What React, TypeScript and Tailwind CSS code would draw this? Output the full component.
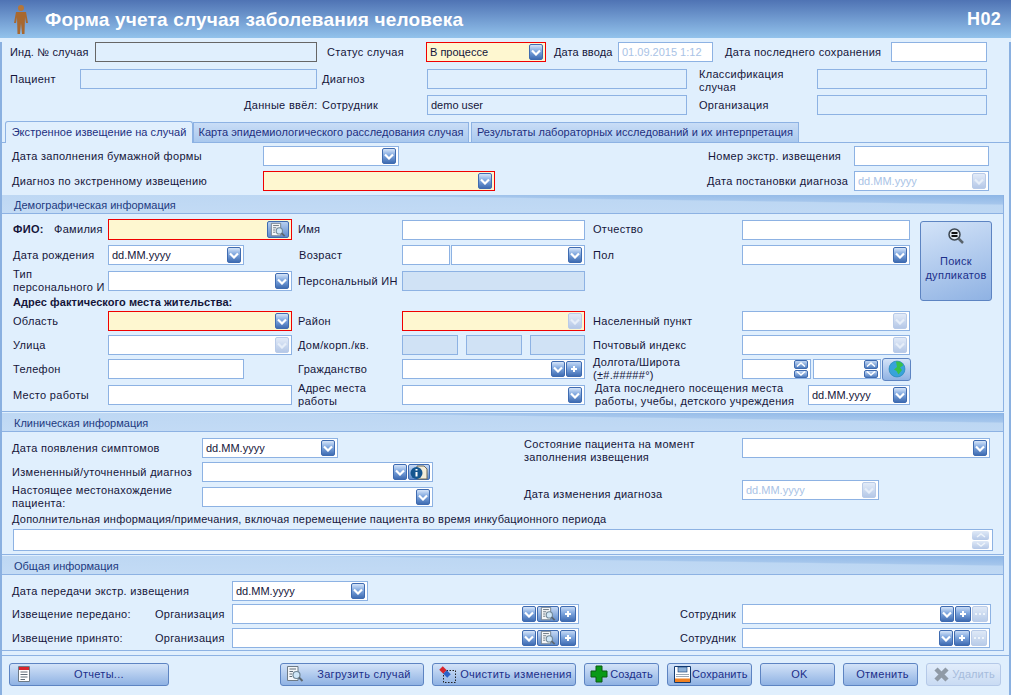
import type { ReactNode } from "react";

const TONES = {
  white: "border-[#8db2e3] bg-white",
  red: "border-[#f00000] bg-[#fef7d0]",
  blank: "border-[#8db2e3] bg-[#e0effd]",
  shade: "border-[#8db2e3] bg-[#d0e2f5]",
  dark: "border-[#666666] bg-[#e0effd]",
};

function Row({ className = "", h = "h-5", children }: { className?: string; h?: string; children: ReactNode }) {
  return <div className={"flex items-center " + h + " " + className}>{children}</div>;
}

function Lb({ className = "", children }: { className?: string; children: ReactNode }) {
  return <div className={"shrink-0 leading-[13px] " + className}>{children}</div>;
}

function Chevron({ off }: { off?: boolean }) {
  return (
    <svg width="10" height="7" viewBox="0 0 10 7">
      <path d="M1 1.5 L5 5.5 L9 1.5" fill="none" stroke={off ? "#e6eef9" : "#ffffff"} strokeWidth="2.2" />
    </svg>
  );
}

function Arrow({ off }: { off?: boolean }) {
  return (
    <div
      className={
        "flex h-4 w-[14px] shrink-0 items-center justify-center rounded-[2px] border " +
        (off
          ? "border-[#b9cbe8] bg-[linear-gradient(180deg,#e2ebf8,#b5c8e7)]"
          : "border-[#3f6bb0] bg-[linear-gradient(180deg,#d6e5f9,#7ea6de_45%,#3f6cb2)]")
      }
    >
      <Chevron off={off} />
    </div>
  );
}

function Plus() {
  return (
    <div className="flex h-4 w-4 shrink-0 items-center justify-center rounded-[2px] border border-[#3f6bb0] bg-[linear-gradient(180deg,#c5d9f5,#7ea6de_45%,#3f6cb2)]">
      <svg width="8" height="8" viewBox="0 0 8 8">
        <path d="M4 1 V7 M1 4 H7" stroke="#ffffff" strokeWidth="2" />
      </svg>
    </div>
  );
}

function Dots() {
  return (
    <div className="flex h-4 w-4 shrink-0 items-center justify-center rounded-[2px] border border-[#b9cbe8] bg-[linear-gradient(180deg,#dfe9f7,#b9cce9)]">
      <svg width="10" height="2" viewBox="0 0 10 2">
        <path d="M0 1 H2 M4 1 H6 M8 1 H10" stroke="#eef4fb" strokeWidth="2" />
      </svg>
    </div>
  );
}

function DocLens({ size = 18 }: { size?: number }) {
  return (
    <svg width={size} height={size} viewBox="0 0 18 18">
      <path d="M1.5 1.5 H12 V15.5 H1.5 Z" fill="#f4f6f8" stroke="#6d7a86" />
      <path d="M3.5 4 H10 M3.5 6.5 H7 M3.5 9 H6 M3.5 11.5 H6" stroke="#5f6c78" strokeWidth="1" />
      <circle cx="10.5" cy="10" r="3.5" fill="#cfe6f7" stroke="#6f8696" strokeWidth="1.2" />
      <path d="M13 12.5 L16.5 16" stroke="#5d6870" strokeWidth="2" />
    </svg>
  );
}

function Lens() {
  return (
    <div className="flex h-4 w-[22px] shrink-0 items-center justify-center rounded-[2px] border border-[#3f6bb0] bg-[linear-gradient(180deg,#c5d9f5,#5f8bcb)]">
      <DocLens size={16} />
    </div>
  );
}

function Info() {
  return (
    <div className="flex h-4 w-[22px] shrink-0 items-center justify-center rounded-[2px] border border-[#3f6bb0] bg-[linear-gradient(180deg,#c5d9f5,#5f8bcb)]">
      <svg width="20" height="15" viewBox="0 0 20 15">
        <path d="M8 1 H15 L18 4 V14 H8 Z" fill="#f3ecd8" stroke="#6f6a58" />
        <circle cx="7.5" cy="8" r="6" fill="#14558f" />
        <path d="M7.5 4 V5.5 M7.5 7 V11.5" stroke="#ffffff" strokeWidth="2" />
      </svg>
    </div>
  );
}

function Spin() {
  return (
    <div className="flex h-[18px] w-[14px] shrink-0 flex-col gap-px">
      {[0, 1].map((i) => (
        <div key={i} className="flex flex-1 items-center justify-center rounded-[2px] border border-[#3f6bb0] bg-[linear-gradient(180deg,#c5d9f5,#4f7dc0)]">
          <svg width="10" height="5" viewBox="0 0 10 5">
            <path d={i === 0 ? "M1 4.500 L5 1 L9 4.500" : "M1 .5 L5 4 L9 .5"} fill="none" stroke="#ffffff" strokeWidth="1.500" />
          </svg>
        </div>
      ))}
    </div>
  );
}

function Field({
  className = "",
  h = "h-5",
  tone = "white",
  text,
  muted,
  children,
}: {
  className?: string;
  h?: string;
  tone?: keyof typeof TONES;
  text?: string;
  muted?: boolean;
  children?: ReactNode;
}) {
  return (
    <div className={"flex shrink-0 items-center gap-px border pr-[2px] " + h + " " + TONES[tone] + " " + className}>
      <span className={"flex-1 truncate pl-[3px] tracking-normal " + (muted ? "text-[#a9c3e6]" : "text-[#15153a]")}>{text}</span>
      {children}
    </div>
  );
}

function Section({ title, className = "", children }: { title: string; className?: string; children: ReactNode }) {
  return (
    <div className={"mr-[5px] border-r border-b border-[#8db2e3] " + className}>
      <div className="flex h-[19px] items-center border-b border-[#8db2e3] bg-[linear-gradient(180.8deg,#8db6e6_0%,#a5c6ec_28%,#bdd7f3_32%,#c3dbf5_100%)] pt-[2px] pl-3 tracking-normal text-[#1d3a80]">
        {title}
      </div>
      {children}
    </div>
  );
}

function Btn({ className = "", off, icon, label }: { className?: string; off?: boolean; icon?: ReactNode; label: string }) {
  return (
    <button
      className={
        "flex h-[23px] shrink-0 items-center rounded-[3px] border pl-1 whitespace-nowrap " +
        (off
          ? "border-[#b5c9e8] bg-[linear-gradient(180deg,#e2edfb,#c9dbf3)] text-[#a6bcdc]"
          : "border-[#5d84c2] bg-[linear-gradient(180deg,#d3e3f8,#8fb2e3)] text-[#1c2f8a]") +
        " " +
        className
      }
    >
      {icon && <span className="flex w-5 shrink-0 justify-center">{icon}</span>}
      <span className="flex-1 text-center">{label}</span>
    </button>
  );
}

export default function App() {
  return (
    <div className="h-[695px] w-[1011px] overflow-hidden bg-[#e0effd] font-['Liberation_Sans',sans-serif] text-[11px] tracking-[0.3px] text-[#15153a]">
      {/* title */}
      <div className="flex h-[38px] items-center bg-[linear-gradient(180deg,#4f73b4,#93c3ec)] pr-[10px] pl-[13px] font-bold text-white">
        <svg width="16" height="30" viewBox="0 0 16 30" className="shrink-0">
          <circle cx="8" cy="4" r="3" fill="#b5763a" />
          <path d="M3 8 H13 L15 19 H13 L12 13 L11.5 30 H9 L8 19 L7 30 H4.500 L4 13 L3 19 H1 Z" fill="#a8682f" />
        </svg>
        <div className="ml-4 flex-1 text-[19px] leading-none tracking-[0.2px]">Форма учета случая заболевания человека</div>
        <div className="text-[18px] leading-none">H02</div>
      </div>

      <div className="h-[657px] border-x-2 border-b-2 border-[#8ab0e0]">
        {/* case head */}
        <div className="pl-2">
          <Row className="mt-1">
            <Lb className="w-[85px] tracking-[0.15px]">Инд. № случая</Lb>
            <Field className="w-[222px]" tone="dark" />
            <Lb className="ml-[10px] w-[99px]">Статус случая</Lb>
            <Field className="w-[120px]" tone="red" text="В процессе">
              <Arrow />
            </Field>
            <Lb className="ml-2 w-[64px] tracking-[0.1px]">Дата ввода</Lb>
            <Field className="w-[95px]" text="01.09.2015 1:12" muted />
            <Lb className="ml-3 w-[166px]">Дата последнего сохранения</Lb>
            <Field className="w-[96px]" />
          </Row>
          <Row className="mt-[7px]">
            <Lb className="w-[70px]">Пациент</Lb>
            <Field className="w-[237px]" tone="blank" />
            <Lb className="ml-[5px] w-[105px]">Диагноз</Lb>
            <Field className="w-[260px]" tone="blank" />
            <Lb className="mt-1 ml-3 w-[118px]">Классификация случая</Lb>
            <Field className="w-[170px]" tone="blank" />
          </Row>
          <Row className="mt-[6px]">
            <Lb className="ml-[234px] w-[78px]">Данные ввёл:</Lb>
            <Lb className="w-[105px]">Сотрудник</Lb>
            <Field className="w-[260px]" tone="blank" text="demo user" />
            <Lb className="ml-3 w-[118px]">Организация</Lb>
            <Field className="w-[170px]" tone="blank" />
          </Row>
        </div>

        {/* tabs */}
        <div className="mt-[7px] flex h-[21px] items-end border-b border-[#8db2e3] pl-[3px] tracking-[0.05px] whitespace-nowrap">
          <div className="relative z-10 -mb-px flex h-[22px] w-[188px] items-center justify-center rounded-t-[3px] border-x border-t border-[#8db2e3] bg-[#e0effd] text-[#1d2f80]">
            Экстренное извещение на случай
          </div>
          <div className="flex h-5 w-[276px] items-center justify-center border border-b-0 border-[#8db2e3] bg-[linear-gradient(180deg,#c9ddf6,#a9c8ee)] text-[#1d2f80]">
            Карта эпидемиологического расследования случая
          </div>
          <div className="ml-[2px] flex h-5 w-[328px] items-center justify-center border border-b-0 border-[#8db2e3] bg-[linear-gradient(180deg,#c9ddf6,#a9c8ee)] text-[#1d2f80]">
            Результаты лабораторных исследований и их интерпретация
          </div>
        </div>

        {/* notice */}
        <div className="mt-[3px] pl-[10px]">
          <Row>
            <Lb className="w-[251px]">Дата заполнения бумажной формы</Lb>
            <Field className="w-[136px]">
              <Arrow />
            </Field>
            <Lb className="ml-[309px] w-[146px]">Номер экстр. извещения</Lb>
            <Field className="w-[135px]" />
          </Row>
          <Row className="mt-[5px]">
            <Lb className="w-[251px]">Диагноз по экстренному извещению</Lb>
            <Field className="w-[232px]" tone="red">
              <Arrow />
            </Field>
            <Lb className="ml-[212px] w-[147px]">Дата постановки диагноза</Lb>
            <Field className="w-[135px]" text="dd.MM.yyyy" muted>
              <Arrow off />
            </Field>
          </Row>
        </div>

        {/* demographics */}
        <Section title="Демографическая информация" className="mt-1">
          <div className="flex">
            <div className="w-[908px] pl-[11px]">
              <Row className="mt-[5px]" h="h-[21px]">
                <Lb className="flex w-[95px]">
                  <b className="w-[41px]">ФИО:</b>Фамилия
                </Lb>
                <Field className="w-[184px]" h="h-[21px]" tone="red">
                  <div className="flex h-[17px] w-[22px] items-center justify-center rounded-[2px] border border-[#3f6bb0] bg-[linear-gradient(180deg,#b6cff0,#5f8bcb)]">
                    <DocLens size={16} />
                  </div>
                </Field>
                <Lb className="ml-[6px] w-[104px]">Имя</Lb>
                <Field className="w-[183px]" />
                <Lb className="ml-2 w-[149px]">Отчество</Lb>
                <Field className="w-[168px]" />
              </Row>
              <Row className="mt-[5px]">
                <Lb className="w-[95px]">Дата рождения</Lb>
                <Field className="w-[136px]" text="dd.MM.yyyy">
                  <Arrow />
                </Field>
                <Lb className="ml-[55px] w-[103px]">Возраст</Lb>
                <Field className="w-[48px]" />
                <Field className="ml-px w-[134px]">
                  <Arrow />
                </Field>
                <Lb className="ml-2 w-[149px]">Пол</Lb>
                <Field className="w-[168px]">
                  <Arrow />
                </Field>
              </Row>
              <Row className="mt-[6px]">
                <Lb className="w-[95px]">Тип персонального И</Lb>
                <Field className="w-[184px]">
                  <Arrow />
                </Field>
                <Lb className="ml-[6px] w-[104px]">Персональный ИН</Lb>
                <Field className="w-[183px]" tone="shade" />
              </Row>
              <div className="mt-[5px] h-3 leading-3 font-bold tracking-[0.05px]">Адрес фактического места жительства:</div>
              <Row className="mt-[3px]">
                <Lb className="w-[95px]">Область</Lb>
                <Field className="w-[184px]" tone="red">
                  <Arrow />
                </Field>
                <Lb className="ml-[6px] w-[104px]">Район</Lb>
                <Field className="w-[183px]" tone="red">
                  <Arrow off />
                </Field>
                <Lb className="ml-2 w-[149px]">Населенный пункт</Lb>
                <Field className="w-[168px]">
                  <Arrow off />
                </Field>
              </Row>
              <Row className="mt-1">
                <Lb className="w-[95px]">Улица</Lb>
                <Field className="w-[184px]">
                  <Arrow off />
                </Field>
                <Lb className="ml-[6px] w-[104px]">Дом/корп./кв.</Lb>
                <Field className="w-[56px]" tone="shade" />
                <Field className="ml-2 w-[56px]" tone="shade" />
                <Field className="ml-2 w-[55px]" tone="shade" />
                <Lb className="ml-2 w-[149px]">Почтовый индекс</Lb>
                <Field className="w-[168px]">
                  <Arrow off />
                </Field>
              </Row>
              <Row className="mt-1">
                <Lb className="w-[95px]">Телефон</Lb>
                <Field className="w-[136px]" />
                <Lb className="ml-[54px] w-[104px]">Гражданство</Lb>
                <Field className="w-[183px]">
                  <Arrow />
                  <Plus />
                </Field>
                <Lb className="ml-2 w-[149px]">
                  Долгота/Широта
                  <br />
                  (±#.#####°)
                </Lb>
                <Field className="w-[69px]">
                  <Spin />
                </Field>
                <Field className="ml-[2px] w-[68px]">
                  <Spin />
                </Field>
                <div className="ml-px flex h-[23px] w-[29px] shrink-0 items-center justify-center rounded-[3px] border border-[#5d84c2] bg-[linear-gradient(180deg,#d3e3f8,#8fb2e3)]">
                  <svg width="18" height="18" viewBox="0 0 18 18">
                    <circle cx="9" cy="9" r="8" fill="#38a3da" stroke="#1f7fb3" strokeWidth=".6" />
                    <path d="M8 1.500 C12 1 15 3 15 5.500 L12 7.500 L14 10 L10.500 14.500 L8.500 11 L6 9.500 L9 7 Z" fill="#38c14a" />
                  </svg>
                </div>
              </Row>
              <Row className="mt-[6px] mb-[6px]">
                <Lb className="w-[95px]">Место работы</Lb>
                <Field className="w-[184px]" />
                <Lb className="ml-[6px] w-[104px]">Адрес места работы</Lb>
                <Field className="w-[183px]">
                  <Arrow />
                </Field>
                <Lb className="ml-[10px] w-[213px]">
                  Дата последнего посещения места
                  <br />
                  работы, учебы, детского учреждения
                </Lb>
                <Field className="w-[102px]" text="dd.MM.yyyy">
                  <Arrow />
                </Field>
              </Row>
            </div>
            <button className="mt-[7px] ml-[10px] flex h-20 w-[72px] shrink-0 flex-col items-center rounded-[3px] border border-[#5d84c2] bg-[linear-gradient(160deg,#d3e3f8,#8fb2e3)] pt-[5px] leading-[14px] text-[#1c2f8a]">
              <svg width="18" height="18" viewBox="0 0 18 18">
                <circle cx="7.500" cy="7.500" r="5.500" fill="#dfe7ee" stroke="#3c4650" strokeWidth="1.500" />
                <path d="M4.500 6 H10.500 M4.500 9 H10.500" stroke="#111111" strokeWidth="2" />
                <path d="M11.500 11.500 L16 16" stroke="#59636b" strokeWidth="2.500" />
              </svg>
              <span className="mt-[9px]">Поиск</span>
              <span>дупликатов</span>
            </button>
          </div>
        </Section>

        {/* clinical */}
        <Section title="Клиническая информация" className="mt-px">
          <div className="pl-[10px]">
            <div className="flex h-[75px]">
              <div className="w-[512px] shrink-0">
                <Row className="mt-[6px]">
                  <Lb className="w-[190px]">Дата появления симптомов</Lb>
                  <Field className="w-[136px]" text="dd.MM.yyyy">
                    <Arrow />
                  </Field>
                </Row>
                <Row className="mt-1">
                  <Lb className="w-[190px]">Измененный/уточненный диагноз</Lb>
                  <Field className="w-[231px]">
                    <Arrow />
                    <Info />
                  </Field>
                </Row>
                <Row className="mt-[5px]">
                  <Lb className="w-[190px]">Настоящее местонахождение пациента:</Lb>
                  <Field className="w-[231px]">
                    <Arrow />
                  </Field>
                </Row>
              </div>
              <div>
                <div className="mt-[6px] flex items-start">
                  <Lb className="w-[218px]">
                    Состояние пациента на момент
                    <br />
                    заполнения извещения
                  </Lb>
                  <Field className="w-[248px]">
                    <Arrow />
                  </Field>
                </div>
                <div className="mt-4 flex items-start">
                  <Lb className="mt-2 w-[218px]">Дата изменения диагноза</Lb>
                  <Field className="w-[137px]" text="dd.MM.yyyy" muted>
                    <Arrow off />
                  </Field>
                </div>
              </div>
            </div>
            <div className="mt-[6px] h-3 leading-3 tracking-[0.22px]">Дополнительная информация/примечания, включая перемещение пациента во время инкубационного периода</div>
            <Field className="mt-1 mb-[3px] ml-px w-[980px]" h="h-[22px]">
              <div className="mr-px flex h-[18px] w-[17px] flex-col gap-px">
                {[0, 1].map((i) => (
                  <div key={i} className="flex flex-1 items-center justify-center rounded-[2px] bg-[linear-gradient(180deg,#dfe9f7,#b5c8e7)]">
                    <svg width="10" height="5" viewBox="0 0 10 5">
                      <path d={i === 0 ? "M1 4 L5 1 L9 4" : "M1 1 L5 4 L9 1"} fill="none" stroke="#eef4fb" strokeWidth="1.500" />
                    </svg>
                  </div>
                ))}
              </div>
            </Field>
          </div>
        </Section>

        {/* common */}
        <Section title="Общая информация" className="mt-px">
          <div className="pl-[10px]">
            <Row className="mt-[6px]">
              <Lb className="w-[220px]">Дата передачи экстр. извещения</Lb>
              <Field className="w-[136px]" text="dd.MM.yyyy">
                <Arrow />
              </Field>
            </Row>
            <Row className="mt-[3px]">
              <Lb className="w-[143px]">Извещение передано:</Lb>
              <Lb className="w-[77px]">Организация</Lb>
              <Field className="w-[347px]">
                <Arrow />
                <Lens />
                <Plus />
              </Field>
              <Lb className="ml-[101px] w-[62px]">Сотрудник</Lb>
              <Field className="w-[249px]">
                <Arrow />
                <Plus />
                <Dots />
              </Field>
            </Row>
            <Row className="mt-1 mb-[2px]">
              <Lb className="w-[143px]">Извещение принято:</Lb>
              <Lb className="w-[77px]">Организация</Lb>
              <Field className="w-[347px]">
                <Arrow />
                <Lens />
                <Plus />
              </Field>
              <Lb className="ml-[101px] w-[62px]">Сотрудник</Lb>
              <Field className="w-[248px]">
                <Arrow />
                <Plus />
                <Dots />
              </Field>
            </Row>
          </div>
        </Section>

        {/* footer */}
        <div className="mt-1 flex h-[37px] items-center border-t border-[#8db2e3] pl-[7px]">
          <Btn
            className="w-[160px] pr-1"
            label="Отчеты..."
            icon={
              <svg width="14" height="16" viewBox="0 0 14 16">
                <path d="M1.500 .5 H12.500 V15.500 H1.500 Z" fill="#ffffff" stroke="#6d7a86" />
                <rect x="2" y="1" width="10" height="3" fill="#d8262c" />
                <path d="M3.500 6 H10.500 M3.500 8.500 H10.500 M3.500 11 H10.500 M3.500 13.500 H8" stroke="#5f6c78" />
              </svg>
            }
          />
          <Btn className="ml-[111px] w-[144px]" label="Загрузить случай" icon={<DocLens />} />
          <Btn
            className="ml-2 w-[144px]"
            label="Очистить изменения"
            icon={
              <svg width="18" height="18" viewBox="0 0 18 18">
                <rect x="5.500" y="5.500" width="12" height="12" fill="none" stroke="#222222" strokeDasharray="1.500 1.500" />
                <path d="M3 3 L7 7" stroke="#d8262c" strokeWidth="5" />
                <path d="M7 7 L11 11" stroke="#2b62c9" strokeWidth="5" />
              </svg>
            }
          />
          <Btn
            className="ml-2 w-[75px] pr-1 tracking-[0.1px]"
            label="Создать"
            icon={
              <svg width="18" height="18" viewBox="0 0 18 18">
                <path d="M6 1 H12 V6 H17 V12 H12 V17 H6 V12 H1 V6 H6 Z" fill="#0a9a16" stroke="#0a5a10" />
              </svg>
            }
          />
          <Btn
            className="ml-2 w-[85px] pr-1 tracking-[0.1px]"
            label="Сохранить"
            icon={
              <svg width="17" height="17" viewBox="0 0 17 17">
                <path d="M.5 .5 H16.500 V16.500 H.5 Z" fill="#ffffff" stroke="#123a70" />
                <rect x="4" y="1" width="9" height="5" fill="#8fb2d8" stroke="#123a70" strokeWidth=".6" />
                <path d="M2 8.500 H15 M2 10.500 H15" stroke="#9aa7b4" />
                <rect x="1" y="12.500" width="15" height="3.500" fill="#f08020" />
              </svg>
            }
          />
          <Btn className="ml-2 w-[75px]" label="OK" />
          <Btn className="ml-2 w-[75px]" label="Отменить" />
          <Btn
            className="ml-2 w-[75px] pr-1 tracking-[0.1px]"
            off
            label="Удалить"
            icon={
              <svg width="17" height="17" viewBox="0 0 17 17">
                <path d="M3 3 L14 14 M14 3 L3 14" stroke="#8f9aa6" strokeWidth="4.500" />
              </svg>
            }
          />
        </div>
      </div>
    </div>
  );
}
